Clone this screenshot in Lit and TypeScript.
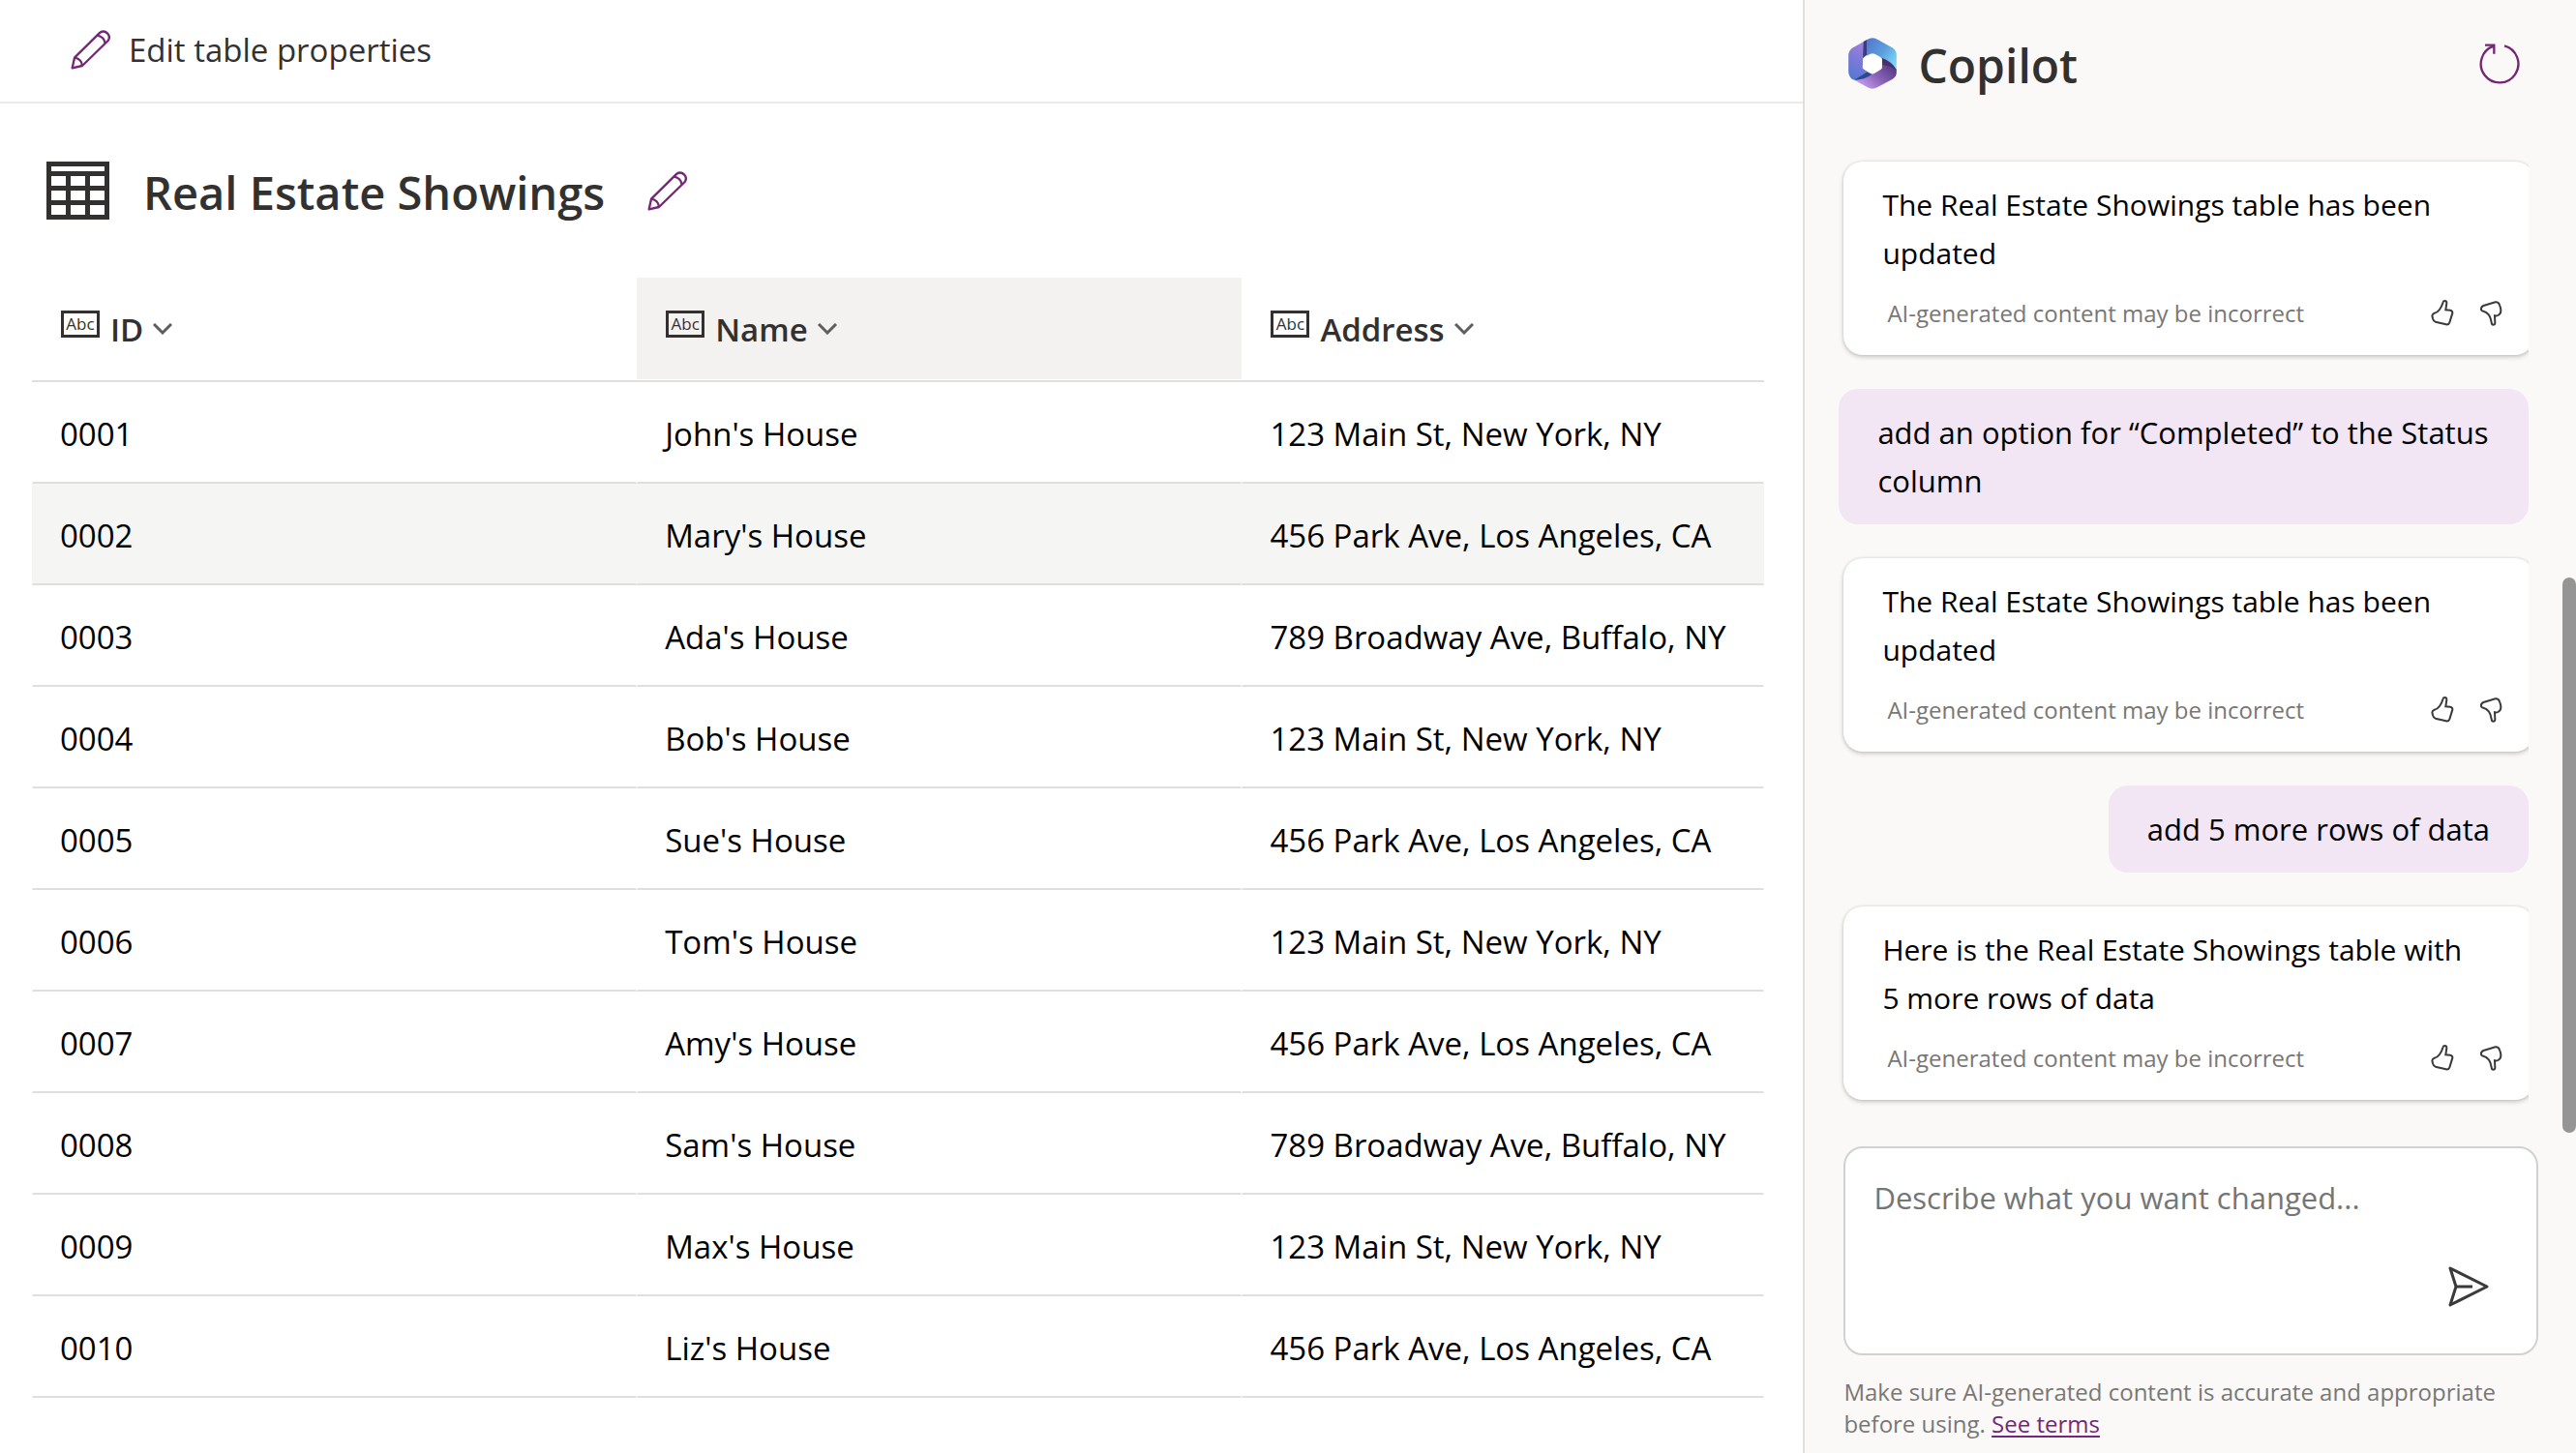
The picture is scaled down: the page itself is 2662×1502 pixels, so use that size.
import { LitElement, html, css, svg } from "lit";
import { customElement, property } from "lit/decorators.js";

const PENCIL = html`<svg class="pencil" viewBox="30 27 123 123" aria-hidden="true">
  <g fill="none" stroke="#742774" stroke-width="7" stroke-linejoin="round">
    <path d="M35 145 L42 113 L121 35 A18 18 0 0 1 146 60 L66 138 Z" />
    <path d="M112 44 A27 27 0 0 1 137 69 M42 113 A26 26 0 0 1 66 138" />
  </g>
</svg>`;

const THUMB_UP = svg`<path d="M113 60 Q119 60 119 67 L116 88 L130 89 Q138 91 137 98 L128 127 Q125 135 117 133 L84 125 Q78 123 76 115 L74 106 Q75 101 81 98 Q91 96 97 87 Q104 78 108 64 Q109 60 113 60 Z" />`;
const THUMB_DOWN = svg`<path d="M261 134 Q267 134 267 128 L266 106 Q274 108 279 103 Q286 98 285 88 Q285 82 281 73 Q278 63 268 64 L231 75 Q224 78 224 85 Q223 91 231 92 Q241 94 248 104 Q254 112 256 127 Q257 134 261 134 Z" />`;

@customElement("column-header")
class ColumnHeader extends LitElement {
  @property() label = "";

  static styles = css`
    :host { display: block; }
    .head {
      display: flex;
      align-items: center;
      width: 100%;
      height: 106px;
      padding: 0 30px;
      border: 0;
      background: none;
      color: #323130;
      font: 600 33px "Open Sans", sans-serif;
      text-align: left;
      cursor: pointer;
    }
    .type {
      box-sizing: border-box;
      width: 40px;
      height: 28px;
      margin: 0 11px 10px 0;
      border: 3px solid #323130;
      font-size: 17px;
      font-weight: 500;
      line-height: 22px;
      text-align: center;
    }
    .chevron { width: 20px; height: 12px; margin-left: 10px; }
  `;

  render() {
    return html`<button class="head">
      <span class="type">Abc</span>
      <span>${this.label}</span>
      <svg class="chevron" viewBox="0 0 20 12" aria-hidden="true">
        <path d="M1 1 L10 10 L19 1" fill="none" stroke="#605e5c" stroke-width="3" />
      </svg>
    </button>`;
  }
}

@customElement("reply-card")
class ReplyCard extends LitElement {
  @property() text = "";

  static styles = css`
    :host {
      display: block;
      box-sizing: border-box;
      padding: 20px 20px 2px 40px;
      border-radius: 20px;
      background: #fff;
      box-shadow: 0 2px 5px rgba(0, 0, 0, 0.2), 0 0 3px rgba(0, 0, 0, 0.12);
    }
    .text { margin: 0; padding-right: 43px; color: #000; font-size: 30px; line-height: 50px; }
    .foot { display: flex; align-items: center; height: 78px; padding-left: 5px; }
    .note { flex: 1; color: #797775; font-size: 24px; line-height: 32px; padding-bottom: 4px; }
    .vote {
      display: flex;
      align-items: center;
      justify-content: center;
      width: 50px;
      height: 50px;
      padding: 0 0 6px;
      border: 0;
      background: none;
      cursor: pointer;
    }
    .thumb { width: 24px; height: 28px; fill: none; stroke: #3b3a39; stroke-width: 6; }
  `;

  render() {
    return html`
      <p class="text">${this.text}</p>
      <div class="foot">
        <span class="note">AI-generated content may be incorrect</span>
        <button class="vote" aria-label="Like">
          <svg class="thumb" viewBox="70 54 72 84">${THUMB_UP}</svg>
        </button>
        <button class="vote" aria-label="Dislike">
          <svg class="thumb" viewBox="218 54 72 84">${THUMB_DOWN}</svg>
        </button>
      </div>
    `;
  }
}

const COLUMNS = ["ID", "Name", "Address"];
const ADDRESSES = [
  "123 Main St, New York, NY",
  "456 Park Ave, Los Angeles, CA",
  "789 Broadway Ave, Buffalo, NY",
];
const ROWS: [string, string, string][] = [
  ["0001", "John's House", ADDRESSES[0]],
  ["0002", "Mary's House", ADDRESSES[1]],
  ["0003", "Ada's House", ADDRESSES[2]],
  ["0004", "Bob's House", ADDRESSES[0]],
  ["0005", "Sue's House", ADDRESSES[1]],
  ["0006", "Tom's House", ADDRESSES[0]],
  ["0007", "Amy's House", ADDRESSES[1]],
  ["0008", "Sam's House", ADDRESSES[2]],
  ["0009", "Max's House", ADDRESSES[0]],
  ["0010", "Liz's House", ADDRESSES[1]],
];

const MESSAGES = [
  { from: "copilot", text: "The Real Estate Showings table has been updated" },
  { from: "user", text: "add an option for “Completed” to the Status column" },
  { from: "copilot", text: "The Real Estate Showings table has been updated" },
  { from: "user", text: "add 5 more rows of data" },
  { from: "copilot", text: "Here is the Real Estate Showings table with 5 more rows of data" },
];

@customElement("app-root")
class AppRoot extends LitElement {
  static styles = css`
    :host {
      display: grid;
      grid-template-columns: minmax(0, 7fr) minmax(0, 3fr);
      min-height: 100vh;
      background: #fff;
      color: #323130;
      font-family: "Open Sans", sans-serif;
    }
    button { cursor: pointer; }

    .toolbar { border-bottom: 2px solid #edebe9; padding: 0 73px; }
    .edit {
      display: flex;
      align-items: center;
      gap: 19px;
      height: 105px;
      padding: 0 0 3px;
      border: 0;
      background: none;
      color: #323130;
      font: 400 33px "Open Sans", sans-serif;
    }
    .pencil { display: block; width: 41px; height: 41px; }

    .titlebar { display: flex; align-items: center; height: 180px; padding: 0 48px; }
    .grid-icon { width: 65px; height: 60px; margin-right: 35px; }
    .title { margin: 0; padding-top: 4px; font-size: 47px; font-weight: 600; line-height: 64px; }
    .rename { margin-left: 44px; padding: 0; border: 0; background: none; }

    .sheet { padding: 0 40px 0 33px; }
    .table { width: 100%; table-layout: fixed; border-collapse: separate; border-spacing: 0; }
    .last { width: 540px; }
    .th { padding: 0; border-bottom: 2px solid #e1dfdd; }
    .th.active { background: #f3f2f1; box-shadow: inset 0 -1px #fff; }
    .td {
      height: 99px;
      padding: 4px 28px 0;
      border: solid transparent;
      border-width: 0 1px 2px;
      border-bottom-color: #e1dfdd;
      color: #000;
      font-size: 33px;
      line-height: 50px;
    }
    .hovered { background: #f5f5f3; }

    .panel {
      position: relative;
      display: flex;
      flex-direction: column;
      border-left: 2px solid #e1dfdd;
      background: #faf9f8;
    }
    .brand { display: flex; align-items: center; height: 130px; padding: 0 57px 0 45px; }
    .logo { width: 50px; height: 53px; margin-right: 22px; }
    .name { flex: 1; margin: 0; font-size: 48px; font-weight: 600; line-height: 64px; padding-top: 6px; }
    .reset { display: block; padding: 0; border: 0; background: none; }
    .reset-icon { display: block; width: 44px; height: 44px; }
    .chat {
      display: flex;
      flex-direction: column;
      gap: 35px;
      margin-right: 49px;
      padding: 37px 0 20px 35px;
      overflow: hidden;
    }
    .reply { margin: 0 -6px 0 5px; }
    .prompt {
      align-self: flex-end;
      margin: 0;
      padding: 20px 40px;
      border-radius: 20px;
      background: #f2e6f5;
      color: #000;
      font-size: 31px;
      line-height: 50px;
    }
    .composer {
      display: flex;
      box-sizing: border-box;
      height: 216px;
      margin: 28px 39px 0 40px;
      border: 2px solid #d1d1d1;
      border-radius: 20px;
      background: #fff;
    }
    .input {
      flex: 1;
      min-width: 0;
      padding: 26px 0 0 29px;
      border: 0;
      outline: 0;
      background: none;
      font: 400 31px/50px "Open Sans", sans-serif;
      resize: none;
    }
    .input::placeholder { color: #757575; opacity: 1; }
    .send { align-self: flex-end; margin: 0 49px 48px 0; padding: 0; border: 0; background: none; }
    .send-icon { display: block; width: 42px; height: 42px; }
    .terms { margin: 21px 39px 0 40px; color: #797775; font-size: 24px; line-height: 33px; }
    .link { color: #742774; text-decoration-thickness: 2px; text-underline-offset: 3px; }
    .scroll {
      position: absolute;
      top: 597px;
      right: 0;
      width: 14px;
      height: 574px;
      border-radius: 7px;
      background: #959595;
    }
  `;

  renderLogo() {
    return html`<svg class="logo" viewBox="60 39 150 160" aria-hidden="true">
      <defs>
        <linearGradient id="left" x1="0.600" y1="0" x2="0.300" y2="1">
          <stop offset="0" stop-color="#a67fdb" />
          <stop offset="1" stop-color="#5477d3" />
        </linearGradient>
        <linearGradient id="top" x1="0" y1="0.100" x2="1" y2="0.900">
          <stop offset="0" stop-color="#5577cc" />
          <stop offset="0.500" stop-color="#5c9fdd" />
          <stop offset="1" stop-color="#7ee0fb" />
        </linearGradient>
        <linearGradient id="bottom" x1="0.100" y1="0.900" x2="0.900" y2="0.300">
          <stop offset="0" stop-color="#c9a0f4" />
          <stop offset="0.500" stop-color="#8e66bb" />
          <stop offset="1" stop-color="#5a3d8a" />
        </linearGradient>
      </defs>
      <path fill="url(#left)" d="M117 46 L74 70 Q60 79 60 94 L60 145 Q61 160 70 167 Q78 173 90 170 L134 152 L104 134 L106 98 Z" />
      <path fill="#34407f" d="M107 51 L118 45 L120 90 L105 103 Z" />
      <path fill="url(#top)" d="M117 46 Q135 34 153 46 L198 71 Q210 79 210 93 L210 138 L165 104 L135 89 L117 96 Z" />
      <path fill="url(#bottom)" d="M78 171 Q105 169 135 152 L164 134 L165 104 L210 138 L210 147 Q210 160 198 168 L150 194 Q135 202 120 194 Z" />
      <path fill="#482f70" d="M164 102 Q196 114 210 139 Q190 128 166 122 Z" />
      <path fill="#2b4a8c" d="M78 171 L118 146 L134 153 Q108 172 78 171 Z" />
      <path fill="#fff" d="M135 89 Q142 89 149 93 L159 99 Q165 103 165 110 L165 130 Q165 136 159 139 L143 149 Q135 154 127 149 L111 139 Q105 136 105 130 L105 110 Q105 103 111 99 L121 93 Q128 89 135 89 Z" />
    </svg>`;
  }

  render() {
    return html`
      <main>
        <div class="toolbar">
          <button class="edit">${PENCIL}<span>Edit table properties</span></button>
        </div>
        <div class="titlebar">
          <svg class="grid-icon" viewBox="0 0 65 60" aria-hidden="true">
            <path fill="#323130" fill-rule="evenodd" d="M0 0H65V60H0Z M5 5V10H60V5Z M5 15V25H20V15Z M25 15V25H40V15Z M45 15V25H60V15Z M5 30V40H20V30Z M25 30V40H40V30Z M45 30V40H60V30Z M5 45V55H20V45Z M25 45V55H40V45Z M45 45V55H60V45Z" />
          </svg>
          <h1 class="title">Real Estate Showings</h1>
          <button class="rename" aria-label="Rename table">${PENCIL}</button>
        </div>
        <div class="sheet">
          <table class="table">
            <colgroup><col /><col /><col class="last" /></colgroup>
            <thead>
              <tr>
                ${COLUMNS.map((c) => html`<th class="th ${c === "Name" ? "active" : ""}" scope="col">
                  <column-header label=${c}></column-header>
                </th>`)}
              </tr>
            </thead>
            <tbody>
              ${ROWS.map((row, i) => html`<tr class=${i === 1 ? "hovered" : ""}>
                ${row.map((cell) => html`<td class="td">${cell}</td>`)}
              </tr>`)}
            </tbody>
          </table>
        </div>
      </main>
      <aside class="panel">
        <header class="brand">
          ${this.renderLogo()}
          <h2 class="name">Copilot</h2>
          <button class="reset" aria-label="Start over">
            <svg class="reset-icon" viewBox="18 22 132 132">
              <path d="M99 35 A58 58 0 1 1 66 36 M39 33 H67 V60" fill="none" stroke="#742774" stroke-width="7" />
            </svg>
          </button>
        </header>
        <div class="chat">
          ${MESSAGES.map((m) => m.from === "user"
            ? html`<p class="prompt">${m.text}</p>`
            : html`<reply-card class="reply" text=${m.text}></reply-card>`)}
        </div>
        <div class="composer">
          <textarea class="input" aria-label="Describe what you want changed" placeholder="Describe what you want changed..."></textarea>
          <button class="send" aria-label="Send">
            <svg class="send-icon" viewBox="0 0 42 42">
              <path d="M2 2 L40 21 L2 40 L8 21 Z M8 21 H25" fill="none" stroke="#3b3a39" stroke-width="3" stroke-linejoin="round" />
            </svg>
          </button>
        </div>
        <p class="terms">
          Make sure AI-generated content is accurate and appropriate before using.
          <a class="link" href="#terms">See terms</a>
        </p>
        <div class="scroll"></div>
      </aside>
    `;
  }
}
